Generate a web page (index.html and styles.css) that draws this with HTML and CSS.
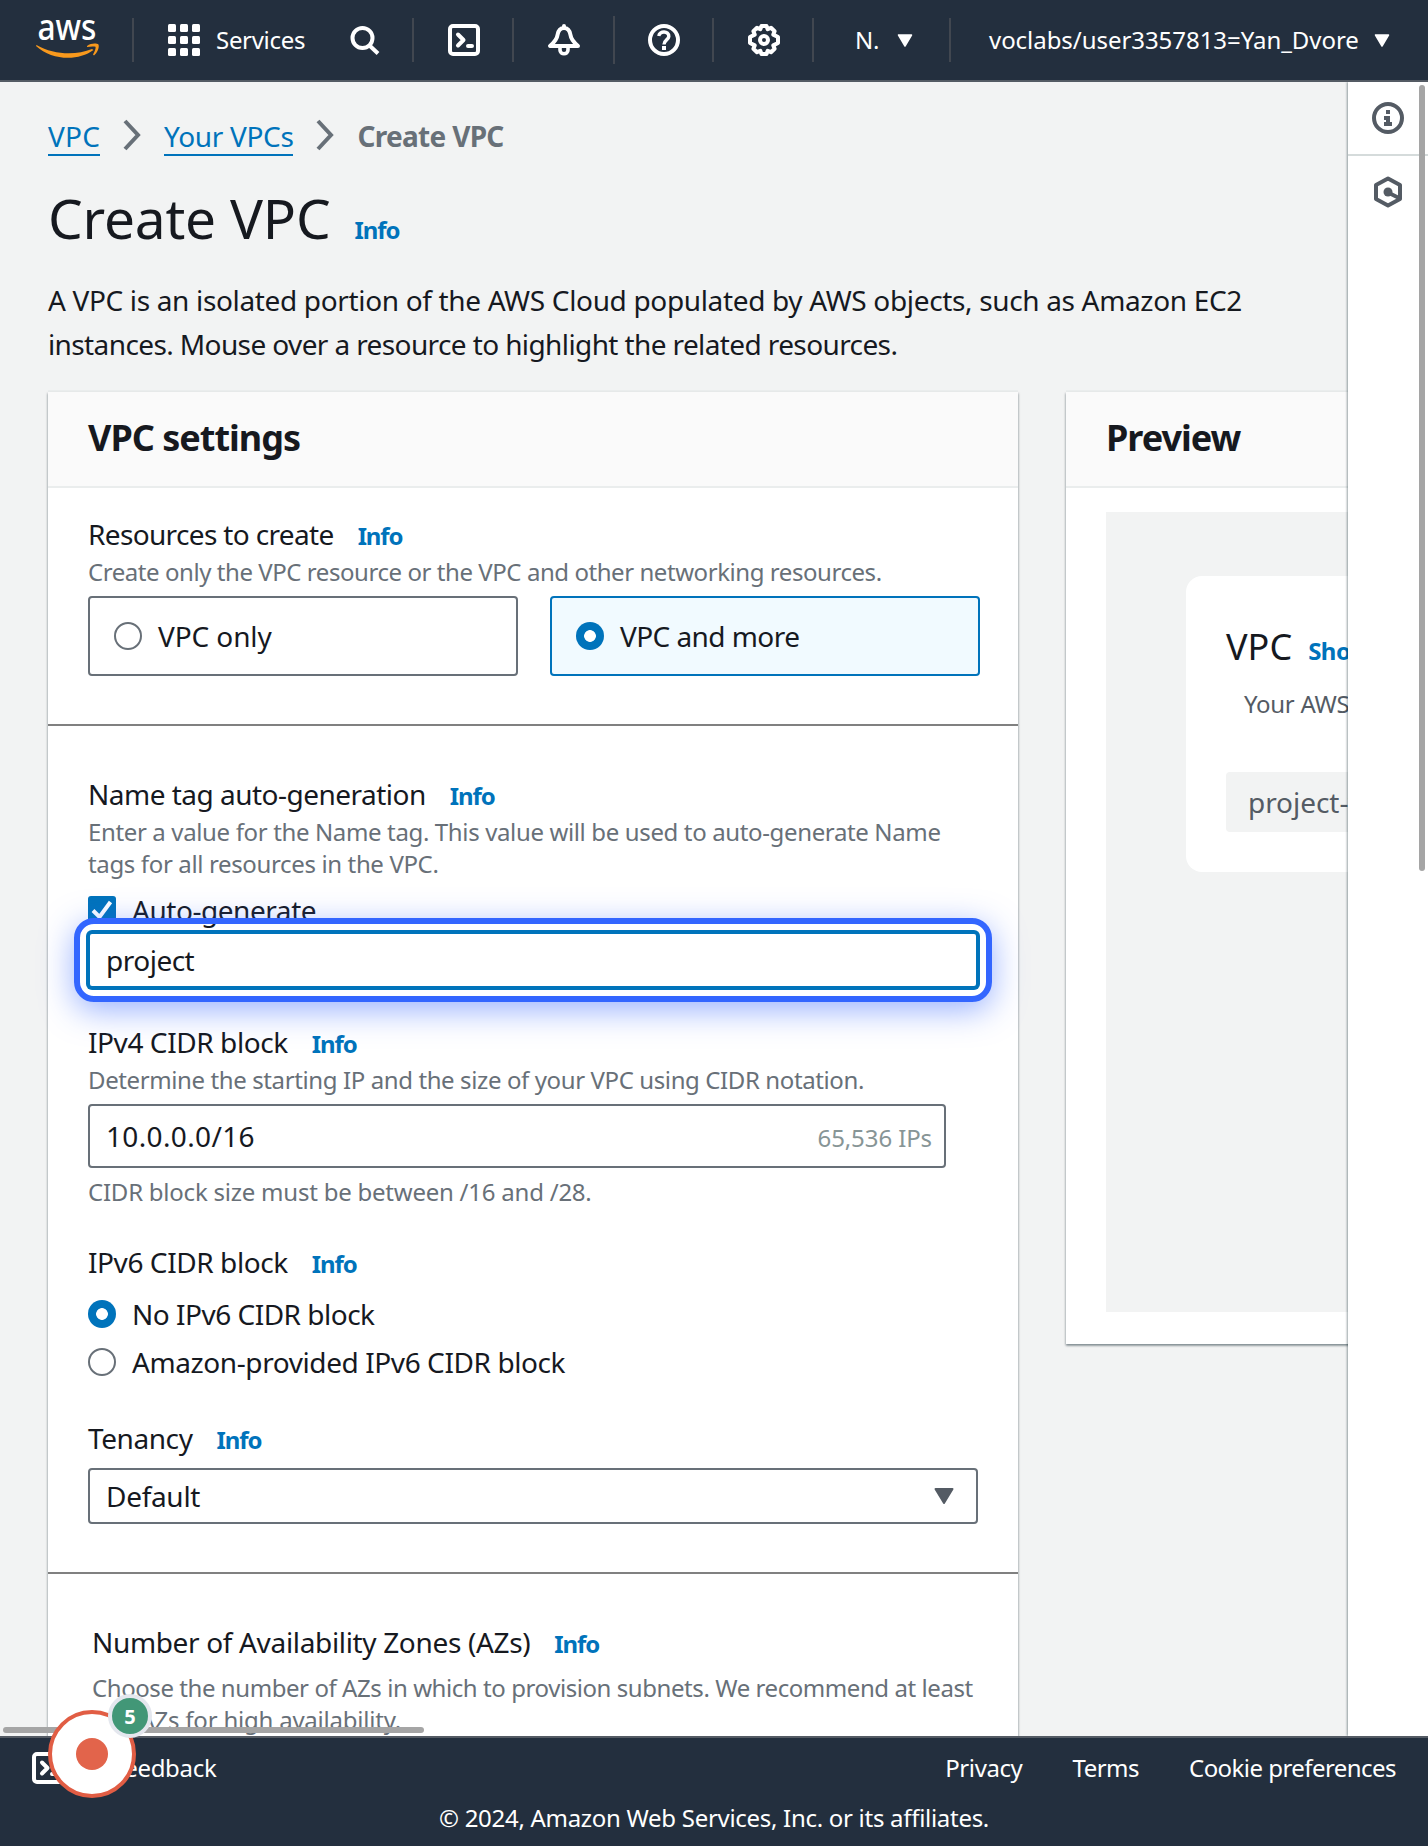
FILE: index.html
```html
<!DOCTYPE html>
<html lang="en">
<head>
<meta charset="utf-8">
<title>Create VPC</title>
<link rel="stylesheet" href="styles.css">
</head>
<body>
<header class="topnav">
  <a class="logo"><svg width="66" height="44" viewBox="0 0 66 44"><text x="1.500" y="22" class="logo-text" textLength="59" lengthAdjust="spacingAndGlyphs">aws</text><path d="M.5 27C18 37 40 37.500 56 31L57.500 32C42 43.500 16 42.500 0 28z" fill="#f8991d"/><path d="M51 28C55 25 60.500 25 62.500 26.500C63.500 29.500 61.500 34.500 58 37.500L57 36.500C59 33 60 30 59.500 28.800C57.500 28 54 28.500 51 29z" fill="#f8991d"/></svg></a>
  <i class="sep sep-logo"></i>
  <div class="services">
    <svg width="32" height="32" viewBox="0 0 32 32" fill="#fff"><rect width="8" height="8" rx="1.500"/><rect x="12" width="8" height="8" rx="1.500"/><rect x="24" width="8" height="8" rx="1.500"/><rect y="12" width="8" height="8" rx="1.500"/><rect x="12" y="12" width="8" height="8" rx="1.500"/><rect x="24" y="12" width="8" height="8" rx="1.500"/><rect y="24" width="8" height="8" rx="1.500"/><rect x="12" y="24" width="8" height="8" rx="1.500"/><rect x="24" y="24" width="8" height="8" rx="1.500"/></svg>
    <span>Services</span>
  </div>
  <div class="nav-cell cell-search"><svg width="32" height="32" viewBox="0 0 32 32" fill="none" stroke="#fff" stroke-width="4"><circle cx="13.500" cy="14" r="10"/><path d="M20.500 21.500L29 29.500"/></svg></div>
  <i class="sep"></i>
  <div class="nav-cell"><svg width="32" height="32" viewBox="0 0 32 32" fill="none" stroke="#fff" stroke-width="4" stroke-linecap="round" stroke-linejoin="round"><rect x="2" y="2" width="28" height="28" rx="3"/><path d="M10 10.500L15.500 16L10 21.500M20 22h4"/></svg></div>
  <i class="sep"></i>
  <div class="nav-cell"><svg width="32" height="32" viewBox="0 0 32 32" fill="none" stroke="#fff" stroke-width="4" stroke-linecap="round" stroke-linejoin="round"><path d="M16 2V4M16 4C11.500 4 10 8 9.500 11C9 15.500 5.500 19 2 22H30C26.500 19 23 15.500 22.500 11C22 8 20.500 4 16 4Z"/><path d="M12 22.500V26C12 31 20 31 20 26V22.500" stroke-width="3.600"/></svg></div>
  <i class="sep sep-tall"></i>
  <div class="nav-cell"><svg width="32" height="32" viewBox="0 0 32 32" fill="none" stroke="#fff" stroke-width="4"><circle cx="16" cy="16" r="14"/><path d="M10.800 12C11.500 6.500 21 6.500 20.800 12.500C20.500 16 16 16 16 20.500" stroke-width="3.400"/><path d="M14 22h4v4h-4z" fill="#fff" stroke="none"/></svg></div>
  <i class="sep"></i>
  <div class="nav-cell"><svg width="32" height="32" viewBox="0 0 32 32" fill="none" stroke="#fff" stroke-width="4" stroke-linejoin="round"><path d="M13.500 2h5l1.200 3.200l3.300-1.400l3.600 3.500l-1.300 3.300l4.700 2.400v6l-4.700 2.400l1.300 3.300l-3.600 3.500l-3.300-1.400L18.500 30h-5l-1.200-3.200l-3.300 1.400l-3.600-3.500l1.300-3.300L2 19v-6l4.700-2.400L5.400 7.300L9 3.800l3.300 1.400z"/><circle cx="16" cy="16" r="4"/></svg></div>
  <i class="sep"></i>
  <div class="nav-menu menu-region"><span>N.</span><svg width="16" height="13" viewBox="0 0 16 13"><path d="M1.500 1h13L8 12z" fill="#fff" stroke="#fff" stroke-width="1.500" stroke-linejoin="round"/></svg></div>
  <i class="sep"></i>
  <div class="nav-menu menu-user"><span class="user">voclabs/user3357813=Yan_Dvore</span><svg width="16" height="13" viewBox="0 0 16 13"><path d="M1.500 1h13L8 12z" fill="#fff" stroke="#fff" stroke-width="1.500" stroke-linejoin="round"/></svg></div>
</header>

<div class="workspace">
  <main class="page">
    <nav class="crumbs">
      <a class="crumb-home">VPC</a>
      <svg width="20" height="32" viewBox="0 0 20 32"><path d="M3 2L16 16L3 30" fill="none" stroke="#687078" stroke-width="4"/></svg>
      <a class="crumb-list">Your VPCs</a>
      <svg width="20" height="32" viewBox="0 0 20 32"><path d="M3 2L16 16L3 30" fill="none" stroke="#687078" stroke-width="4"/></svg>
      <b>Create VPC</b>
    </nav>
    <div class="title"><h1>Create VPC</h1><a class="info">Info</a></div>
    <p class="intro">A VPC is an isolated portion of the AWS Cloud populated by AWS objects, such as Amazon EC2<br><span class="intro-2">instances. Mouse over a resource to highlight the related resources.</span></p>

    <div class="columns">
      <section class="card settings">
        <h2>VPC settings</h2>
        <div class="group">
          <div class="label"><span class="l-res">Resources to create</span><a class="info">Info</a></div>
          <p class="hint h-res">Create only the VPC resource or the VPC and other networking resources.</p>
          <div class="tiles">
            <div class="tile"><i class="radio"></i><span class="t-only">VPC only</span></div>
            <div class="tile tile-on"><i class="radio radio-on"></i><span>VPC and more</span></div>
          </div>
        </div>
        <div class="group group-next">
          <div class="label"><span class="l-name">Name tag auto-generation</span><a class="info">Info</a></div>
          <p class="hint h-name">Enter a value for the Name tag. This value will be used to auto-generate Name<br>tags for all resources in the VPC.</p>
          <div class="option auto"><svg width="28" height="28" viewBox="0 0 28 28"><rect width="28" height="28" rx="3" fill="#0073bb"/><path d="M5 14.500L11.500 21L22.500 6" fill="none" stroke="#fff" stroke-width="4"/></svg><span class="o-auto">Auto-generate</span></div>
          <div class="field field-focus"><span>project</span><div class="ring"></div></div>

          <div class="label label-v4"><span class="l-cidr">IPv4 CIDR block</span><a class="info">Info</a></div>
          <p class="hint h-cidr">Determine the starting IP and the size of your VPC using CIDR notation.</p>
          <div class="field field-cidr"><span class="cidr">10.0.0.0/16</span><span class="count">65,536 IPs</span></div>
          <p class="hint constraint">CIDR block size must be between /16 and /28.</p>

          <div class="label label-v6"><span class="l-cidr">IPv6 CIDR block</span><a class="info">Info</a></div>
          <div class="options">
            <div class="option"><i class="radio radio-on"></i><span class="o-none">No IPv6 CIDR block</span></div>
            <div class="option"><i class="radio"></i><span class="o-amazon">Amazon-provided IPv6 CIDR block</span></div>
          </div>

          <div class="label label-ten"><span class="l-ten">Tenancy</span><a class="info">Info</a></div>
          <div class="field field-select"><span>Default</span><svg width="20" height="16" viewBox="0 0 20 16"><path d="M1.500 1h17L10 15z" fill="#545b64" stroke="#545b64" stroke-width="2" stroke-linejoin="round"/></svg></div>
        </div>
        <div class="group group-next group-az">
          <div class="label"><span class="l-az">Number of Availability Zones (AZs)</span><a class="info">Info</a></div>
          <p class="hint h-az">Choose the number of AZs in which to provision subnets. We recommend at least<br><span class="h-az-2">two AZs for high availability.</span></p>
        </div>
      </section>

      <section class="card preview">
        <h2>Preview</h2>
        <div class="canvas">
          <div class="vpc-card">
            <div class="vpc-title"><span>VPC</span><a class="info">Show details</a></div>
            <p>Your AWS virtual network</p>
            <div class="chip">project-vpc</div>
          </div>
        </div>
      </section>
    </div>
  </main>
  <aside class="tools">
    <div class="tool"><svg width="32" height="32" viewBox="0 0 32 32"><circle cx="16" cy="16" r="14" fill="none" stroke="#545b64" stroke-width="4"/><path d="M14 8h4v4h-4zM12 14h6v6h2v4h-8v-4h2v-2h-2z" fill="#545b64"/></svg></div>
    <div class="tool tool-hex"><svg width="32" height="32" viewBox="0 0 32 32"><path d="M16 2.500L28 9V23L16 29.500L4 23V9z" fill="none" stroke="#545b64" stroke-width="4" stroke-linejoin="round"/><circle cx="16" cy="16" r="4.500" fill="#545b64"/><path d="M17 17L28 22.500" stroke="#545b64" stroke-width="4"/></svg></div>
  </aside>
  <i class="vbar"></i>
  <i class="hbar"></i>
</div>

<footer class="footer">
  <div class="foot-row">
    <svg width="32" height="32" viewBox="0 0 32 32" fill="none" stroke="#fff" stroke-width="4" stroke-linecap="round" stroke-linejoin="round"><rect x="2" y="2" width="28" height="28" rx="3"/><path d="M10 10.500L15.500 16L10 21.500M20 22h4"/></svg>
    <span class="feedback">Feedback</span>
    <a class="f-privacy">Privacy</a><a class="f-terms">Terms</a><a class="f-cookie">Cookie preferences</a>
  </div>
  <div class="copyright"><span>© 2024, Amazon Web Services, Inc. or its affiliates.</span></div>
</footer>

<div class="recorder"><i class="dot"></i><span class="badge">5</span></div>
</body>
</html>
```

FILE: styles.css
```css
* { box-sizing: border-box; }
body {
  margin: 0;
  height: 1846px;
  display: flex;
  flex-direction: column;
  overflow: hidden;
  position: relative;
  font: 28px/44px "Noto Sans", "Open Sans", sans-serif;
  letter-spacing: -0.56px;
  color: #16191f;
  background: #f2f3f3;
}
h1, h2, p { margin: 0; }
svg { display: block; flex: none; overflow: visible; }
span, a { white-space: nowrap; }

.topnav {
  flex: none;
  height: 82px;
  display: flex;
  align-items: center;
  background: #232f3e;
  border-bottom: 2px solid #545b64;
  color: #fff;
  font-size: 24px;
  letter-spacing: -0.3px;
}
.logo { margin-left: 36px; width: 66px; }
.logo-text { font: 500 37px "Noto Sans", sans-serif; letter-spacing: 0; fill: #fff; }
.sep { flex: none; width: 2px; height: 44px; background: #414750; }
.sep-logo { margin-left: 30px; }
.sep-tall { height: 48px; margin: 0 -1px 0 1px; }
.services { display: flex; align-items: center; gap: 16px; margin-left: 34px; width: 148px; }
.nav-cell { width: 98px; padding-left: 2px; display: flex; justify-content: center; }
.cell-search { width: 96px; }
.nav-menu { display: flex; align-items: center; }
.menu-region { width: 135px; padding-left: 41px; gap: 18px; }
.menu-user { padding-left: 38px; gap: 15px; }
.user { letter-spacing: -0.05px; }

.workspace { flex: 1; min-height: 0; display: flex; position: relative; overflow: hidden; }
.page { width: 1348px; flex: none; padding: 32px 0 0 48px; overflow: hidden; }
.crumbs { display: flex; align-items: center; gap: 22px; height: 44px; }
.crumbs a { color: #0073bb; line-height: 40px; height: 42px; border-bottom: 2px solid #0073bb; padding-top: 2px; margin-top: -2px; }
.crumbs b { color: #687078; letter-spacing: -0.7px; }
.crumbs svg { margin-top: -2px; }
.crumb-home { letter-spacing: 0.2px; }
.crumb-list { letter-spacing: -0.33px; }
.title { display: flex; align-items: baseline; height: 72px; margin-top: 24px; }
h1 { font-weight: 400; font-size: 55px; line-height: 72px; letter-spacing: -0.2px; }
.info { font-size: 24px; font-weight: 700; color: #0073bb; margin-left: 24px; letter-spacing: -1.1px; }
.intro { margin-top: 24px; height: 88px; white-space: nowrap; letter-spacing: -0.34px; }
.intro-2 { letter-spacing: -0.61px; }

.columns { display: flex; gap: 48px; margin-top: 26px; align-items: flex-start; }
.card { flex: none; background: #fff; box-shadow: 0 2px 2px 0 rgba(0,28,36,.3), 1px 1px 2px 0 rgba(0,28,36,.15), -1px 1px 2px 0 rgba(0,28,36,.15), 0 -2px 0 0 #eaeded; }
h2 { height: 96px; padding: 0 40px; font-size: 36px; line-height: 91px; letter-spacing: -1px; background: #fafafa; border-bottom: 2px solid #eaeded; }
.settings { width: 970px; height: 1400px; }
.preview { width: 900px; height: 952px; }

.group { padding: 24px 38px 48px 40px; }
.group-next { padding-top: 46px; border-top: 2px solid #808080; }
.label { display: flex; align-items: baseline; height: 44px; }
.l-res { letter-spacing: -0.65px; }
.l-name { letter-spacing: -0.51px; }
.l-cidr { letter-spacing: -0.42px; }
.l-az { letter-spacing: -0.34px; }
.l-ten { letter-spacing: -0.42px; }
.hint { font-size: 24px; line-height: 32px; color: #687078; white-space: nowrap; }
.h-res { letter-spacing: -0.44px; }
.h-name { letter-spacing: -0.36px; }
.h-cidr { letter-spacing: -0.39px; }
.tiles { display: grid; grid-template-columns: 1fr 1fr; gap: 32px; margin-top: 8px; }
.tile { display: flex; gap: 16px; height: 80px; padding: 24px; line-height: 28px; border: 2px solid #687078; border-radius: 4px; }
.tile-on { border-color: #0073bb; background: #f1faff; }
.t-only { letter-spacing: -0.1px; }
.radio { flex: none; width: 28px; height: 28px; border: 2px solid #687078; border-radius: 50%; background: #fff; }
.radio-on { border: 8.500px solid #0073bb; background: #0073bb radial-gradient(circle, #fff 5.500px, #0073bb 6.200px) border-box; border-color: transparent; }
.option { display: flex; gap: 16px; height: 28px; line-height: 28px; }
.o-auto { letter-spacing: -0.45px; }
.o-none { letter-spacing: -0.5px; }
.o-amazon { letter-spacing: -0.41px; }
.auto { margin-top: 16px; }
.options { display: grid; gap: 20px; margin-top: 16px; }
.field { display: flex; align-items: center; width: 890px; height: 56px; padding: 0 16px; border: 2px solid #687078; border-radius: 4px; background: #fff; margin-top: 8px; }
.field-focus { position: relative; border-color: #0073bb; box-shadow: 0 0 0 2px #0073bb; letter-spacing: -0.5px; }
.ring { position: absolute; inset: -16px; border: 6px solid #3366ff; border-radius: 20px; box-shadow: 0 8px 32px rgba(51,102,255,.5); }
.field-cidr { width: 858px; height: 64px; justify-content: space-between; padding-right: 12px; }
.cidr { letter-spacing: 0.35px; }
.count { font-size: 24px; letter-spacing: -0.1px; color: #879596; padding-top: 3px; }
.constraint { margin-top: 8px; letter-spacing: -0.23px; }
.field-select { justify-content: space-between; padding-right: 22px; letter-spacing: -0.3px; }
.label-v4, .label-v6 { margin-top: 32px; }
.label-ten { margin-top: 40px; }
.group-az { padding-left: 44px; }
.h-az { margin-top: 8px; letter-spacing: -0.43px; }
.h-az-2 { letter-spacing: -0.22px; }

.canvas { margin: 24px 40px 0; height: 800px; padding: 64px 80px; background: #f2f3f3; }
.vpc-card { height: 296px; padding: 41px 40px; background: #fff; border-radius: 16px; }
.vpc-title { display: flex; align-items: baseline; font-size: 36px; height: 60px; line-height: 60px; letter-spacing: 0; }
.vpc-title .info { margin-left: 16px; letter-spacing: -0.5px; }
.vpc-card p { font-size: 24px; line-height: 32px; margin: 11px 0 0 18px; letter-spacing: -0.3px; color: #545b64; white-space: nowrap; }
.chip { height: 60px; line-height: 60px; margin-top: 52px; padding-left: 22px; background: #f2f3f3; border-radius: 4px; letter-spacing: -0.05px; color: #545b64; }

.tools { flex: 1; background: #fff; position: relative; box-shadow: -1px 0 2px rgba(0,28,36,.4); }
.tool { height: 74px; padding: 20px 24px; border-bottom: 2px solid #d5dbdb; }
.tool-hex { border: 0; }
.vbar { position: absolute; left: 1419px; top: 3px; width: 6px; height: 786px; border-radius: 3px; background: #a5a5a5; }
.hbar { position: absolute; left: 3px; bottom: 3px; width: 421px; height: 6px; border-radius: 3px; background: #a5a5a5; }

.footer { flex: none; height: 110px; background: #232f3e; border-top: 2px solid #545b64; color: #fff; font-size: 24px; letter-spacing: -0.5px; }
.foot-row { display: flex; align-items: center; height: 60px; padding: 0 32px; }
.feedback { margin: 0 auto 0 48px; letter-spacing: -0.3px; }
.f-privacy { letter-spacing: -0.4px; }
.f-cookie { letter-spacing: -0.55px; }
.f-terms { margin: 0 50px 0 50px; }
.copyright { text-align: center; line-height: 40px; letter-spacing: -0.29px; }

.recorder { position: absolute; left: 48px; top: 1710px; width: 88px; height: 88px; border: 4px solid #e15d44; border-radius: 50%; background: #fff; display: grid; place-items: center; }
.dot { width: 32px; height: 32px; border-radius: 50%; background: #e2644b; }
.badge { position: absolute; left: 56px; top: -20px; width: 44px; height: 44px; border: 4px solid #e4e7ee; border-radius: 50%; background: #429777; color: #fff; font-size: 20px; font-weight: 700; letter-spacing: 0; line-height: 37px; text-align: center; }
```
